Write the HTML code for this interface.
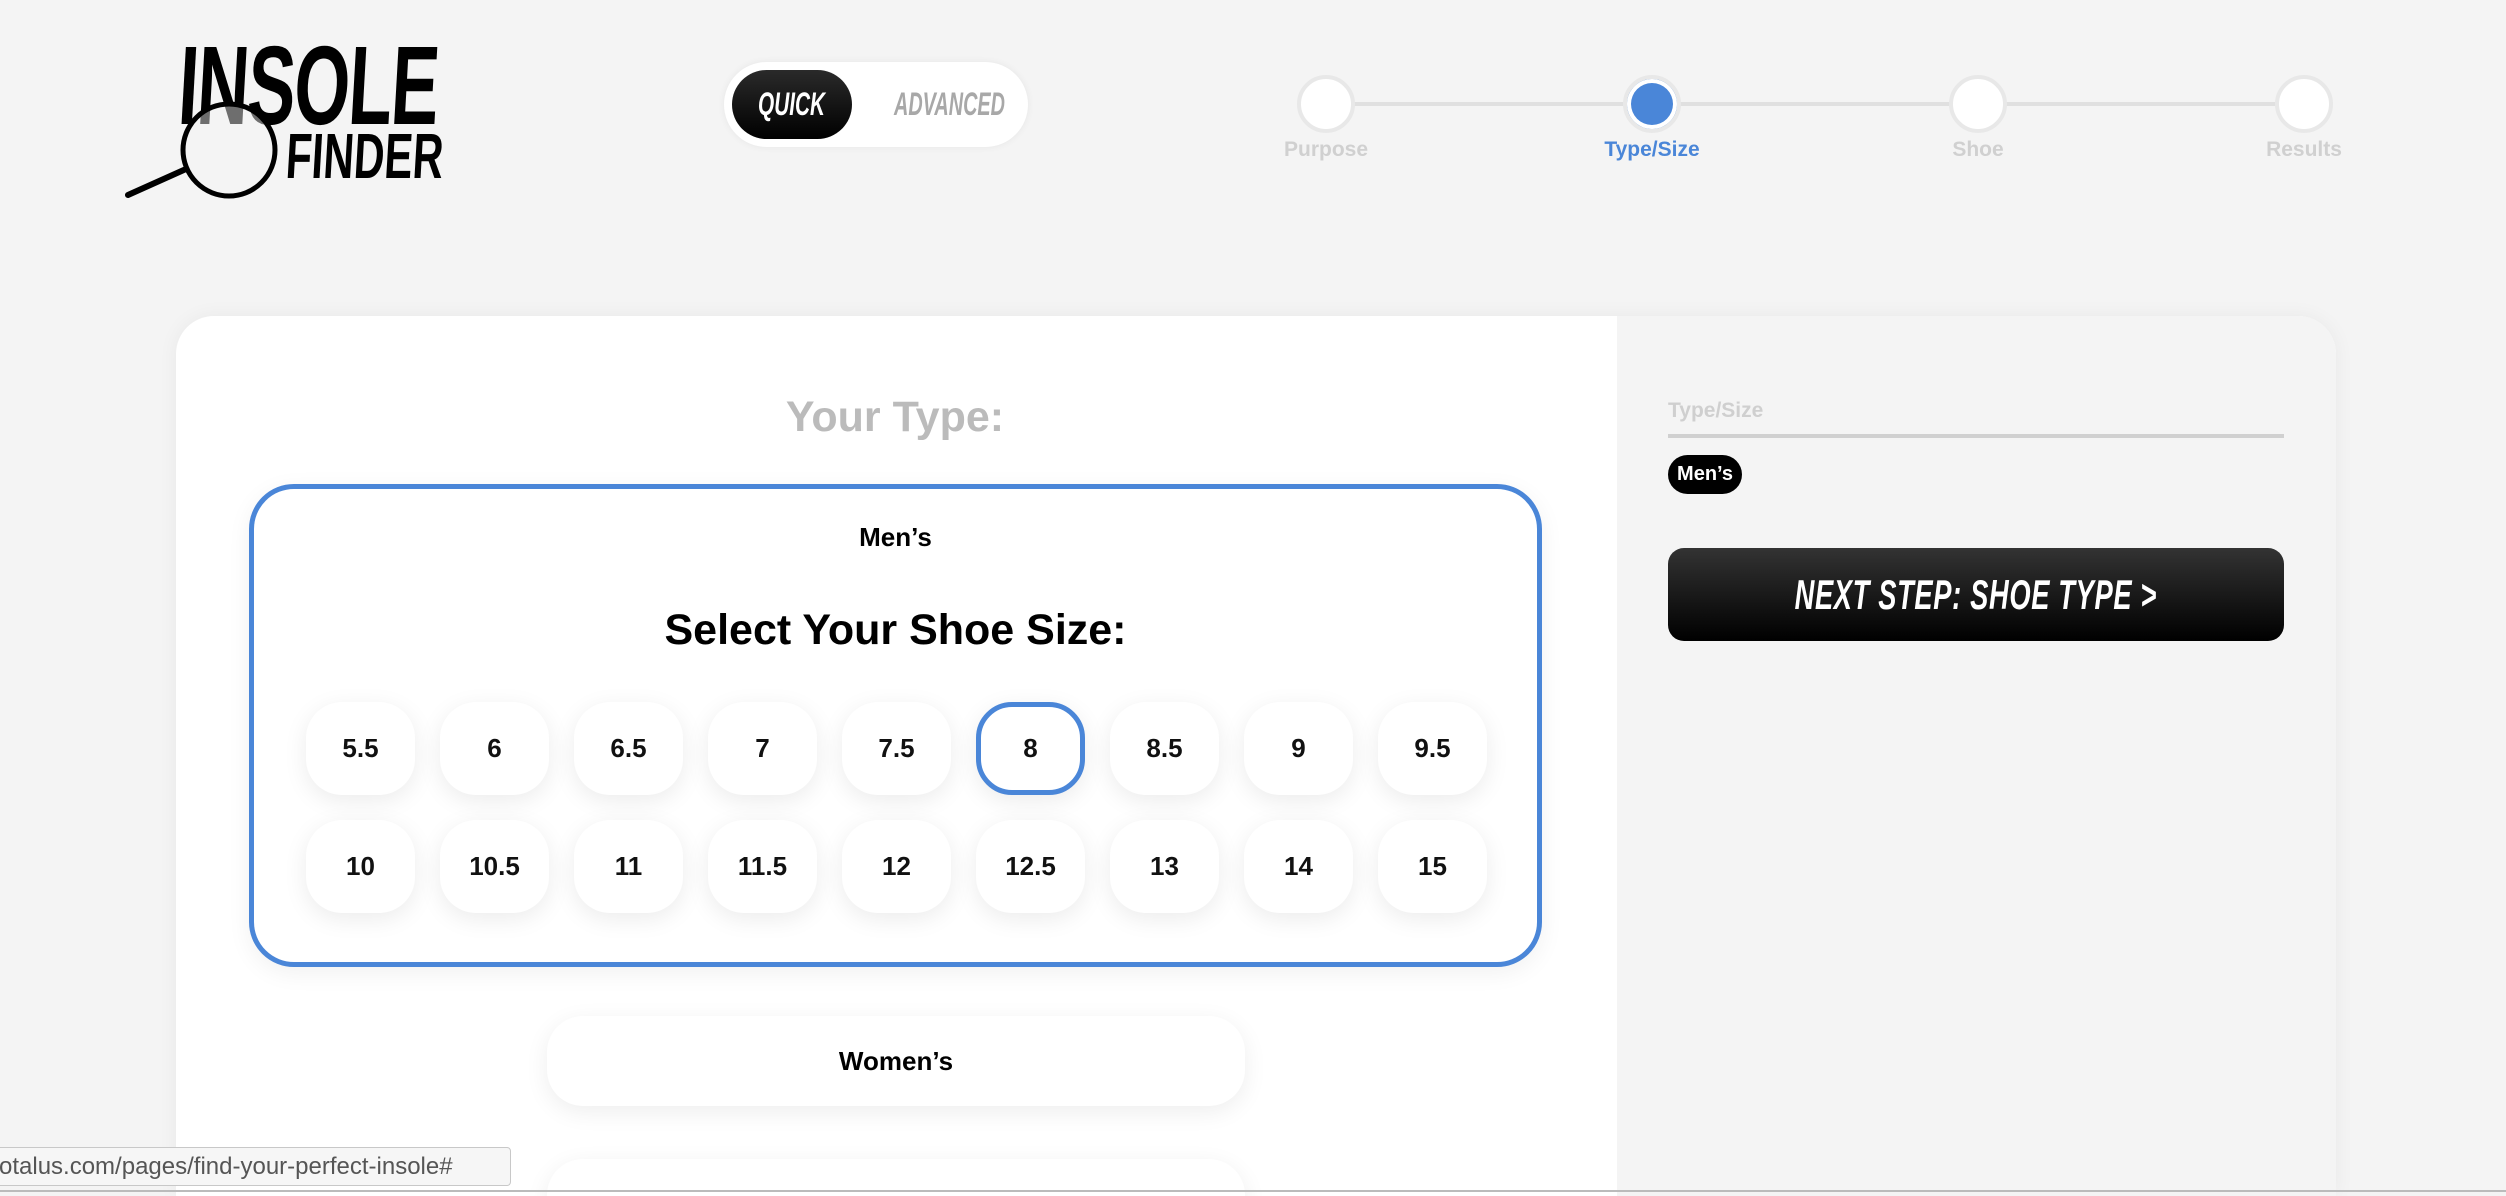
<!DOCTYPE html>
<html style="height:1196px;overflow:hidden"><head><meta charset="utf-8"><style>
*{margin:0;padding:0;box-sizing:border-box}
body{width:2506px;height:1196px;background:#f4f4f4;font-family:"Liberation Sans",sans-serif;position:relative;overflow:hidden}
.a{position:absolute}
.n{font-family:"Liberation Sans Narrow","Liberation Sans",sans-serif;font-weight:bold;font-style:italic}
.c{text-align:center}
.sx{display:inline-block;transform-origin:center}
.st{width:58px;height:58px;border-radius:50%;background:#fff;border:4px solid #e8e8e8;top:75px}
.lb{top:138px;font-size:21px;font-weight:bold;color:#d0d0d0;width:200px;text-align:center}
.sz{width:109px;height:93px;border-radius:36px;background:#fff;box-shadow:0 6px 24px rgba(0,0,0,.08);font-weight:bold;font-size:26px;line-height:93px;text-align:center;color:#111}
</style></head><body>
<!-- logo -->
<div class="a n" style="left:182px;top:30px;font-size:112px;line-height:112px;font-style:normal;letter-spacing:-2px;transform:scaleX(0.64) skewX(-5deg);transform-origin:left top;color:#000">INSOLE</div>
<div class="a n" style="left:288px;top:124px;font-size:64px;line-height:64px;font-style:normal;transform:scaleX(0.66) skewX(-5deg);transform-origin:left top;color:#000">FINDER</div>
<svg class="a" style="left:120px;top:95px" width="170" height="115"><circle cx="109" cy="55" r="46" fill="rgba(244,244,244,0.45)" stroke="#000" stroke-width="5"/><line x1="8" y1="100" x2="66" y2="74" stroke="#000" stroke-width="6" stroke-linecap="round"/></svg>
<!-- toggle -->
<div class="a" style="left:724px;top:62px;width:304px;height:85px;border-radius:43px;background:#fff;box-shadow:0 0 8px rgba(0,0,0,.06)"></div>
<div class="a" style="left:732px;top:70px;width:120px;height:69px;border-radius:35px;background:linear-gradient(#2a2a2a,#000)"></div>
<div class="a n c" style="left:712px;top:86px;width:160px;font-size:32px;color:#fff"><span class="sx" style="transform:scaleX(0.65)">QUICK</span></div>
<div class="a n c" style="left:860px;top:86px;width:160px;font-size:32px;color:#a8a8a8"><span class="sx" style="transform:scaleX(0.62)">ADVANCED</span></div>
<!-- steps -->
<div class="a" style="left:1326px;top:102px;width:978px;height:4px;background:#e0e0e0"></div>
<div class="a st" style="left:1297px"></div>
<div class="a st" style="left:1623px;background:#4a86d8;box-shadow:inset 0 0 0 4px #fff"></div>
<div class="a st" style="left:1949px"></div>
<div class="a st" style="left:2275px"></div>
<div class="a lb" style="left:1226px">Purpose</div>
<div class="a lb" style="left:1552px;color:#4a86d8">Type/Size</div>
<div class="a lb" style="left:1878px">Shoe</div>
<div class="a lb" style="left:2204px">Results</div>
<!-- card -->
<div class="a" style="left:176px;top:316px;width:2160px;height:880px;border-radius:38px 38px 0 0;background:#fff;box-shadow:0 0 20px rgba(0,0,0,.05);overflow:hidden">
<div class="a" style="left:1441px;top:0;width:719px;height:880px;background:#f4f4f4"></div>
</div>
<div class="a c" style="left:595px;top:393px;width:600px;font-size:43px;font-weight:bold;color:#bbb">Your Type:</div>
<div class="a" style="left:249px;top:484px;width:1293px;height:483px;border:5px solid #4a86d8;border-radius:45px;background:#fff;box-shadow:0 6px 24px rgba(0,0,0,.06)"></div>
<div class="a c" style="left:249px;top:522px;width:1293px;font-size:26px;font-weight:bold">Men’s</div>
<div class="a c" style="left:249px;top:606px;width:1293px;font-size:43px;font-weight:bold">Select Your Shoe Size:</div>
<div id="g"></div>
<div class="a c" style="left:547px;top:1016px;width:698px;height:90px;border-radius:36px;background:#fff;box-shadow:0 6px 24px rgba(0,0,0,.07);font-size:26px;font-weight:bold;line-height:90px">Women’s</div>
<div class="a" style="left:547px;top:1159px;width:698px;height:90px;border-radius:36px;background:#fff;box-shadow:0 6px 24px rgba(0,0,0,.07)"></div>
<!-- right -->
<div class="a" style="left:1668px;top:399px;font-size:21px;font-weight:bold;color:#cfcfcf">Type/Size</div>
<div class="a" style="left:1668px;top:434px;width:616px;height:4px;background:#d0d0d0"></div>
<div class="a c" style="left:1668px;top:455px;width:74px;height:39px;border-radius:20px;background:#000;color:#fff;font-size:20px;font-weight:bold;line-height:39px">Men’s</div>
<div class="a c n" style="left:1668px;top:548px;width:616px;height:93px;border-radius:16px;background:linear-gradient(#333,#000);color:#fff;font-size:42px;line-height:93px;letter-spacing:1px;white-space:nowrap"><span class="sx" style="transform:scaleX(0.65)">NEXT STEP: SHOE TYPE &gt;</span></div>
<!-- status -->
<div class="a" style="left:-4px;top:1147px;width:515px;height:39px;background:#f6f6f6;border:1px solid #c8c8c8;border-radius:0 4px 4px 0;font-size:24px;line-height:37px;color:#555;white-space:nowrap;overflow:hidden;padding-left:2px">otalus.com/pages/find-your-perfect-insole#</div>
<div class="a" style="left:0;top:1190px;width:2506px;height:2px;background:#bbb"></div>
<script>
var s=[["5.5","6","6.5","7","7.5","8","8.5","9","9.5"],["10","10.5","11","11.5","12","12.5","13","14","15"]],h="";
s.forEach(function(r,i){r.forEach(function(t,j){var x=360+j*134-54,y=(i?866:748)-46;var sel=(t=="8")?"border:5px solid #4a86d8;line-height:83px;":"";h+='<div class="a sz" style="left:'+x+'px;top:'+y+'px;'+sel+'">'+t+'</div>';});});
document.getElementById("g").innerHTML=h;
</script>
</body></html>
